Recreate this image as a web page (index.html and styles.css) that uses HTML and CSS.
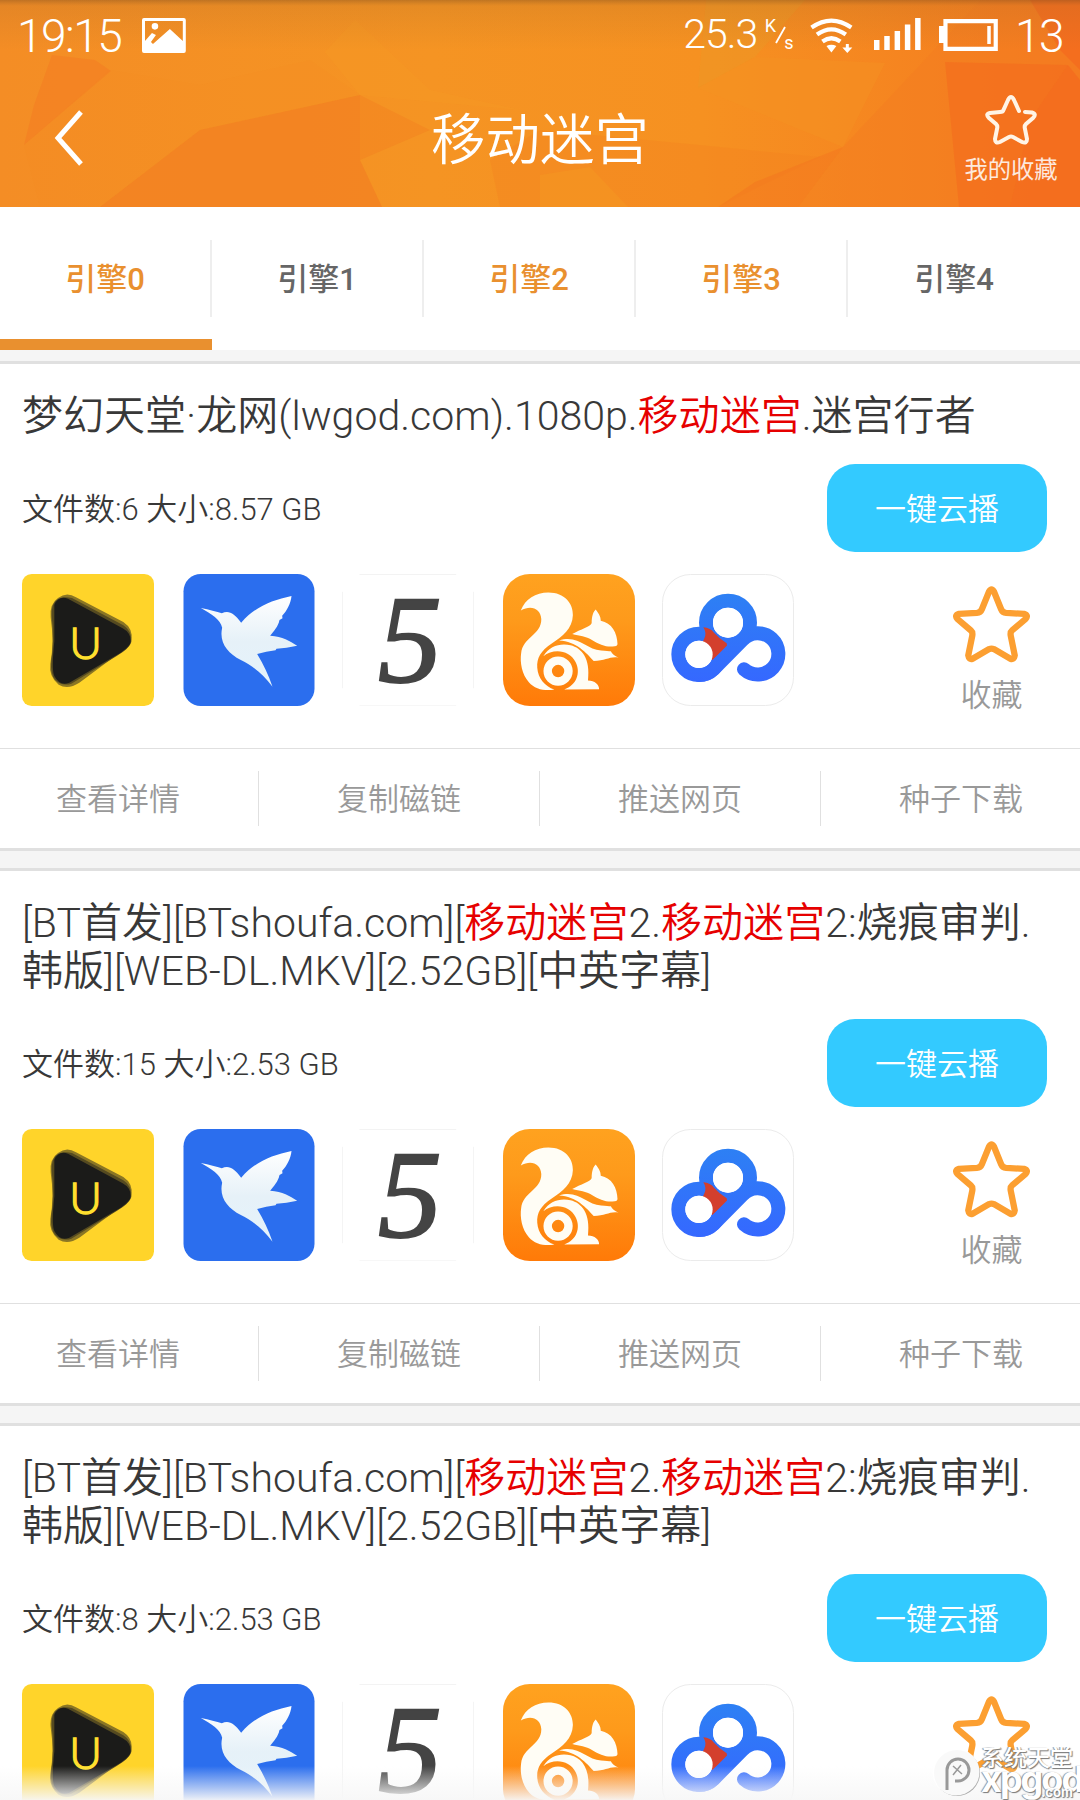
FILE: index.html
```html
<!DOCTYPE html>
<html lang="zh-CN">
<head>
<meta charset="utf-8">
<title>移动迷宫</title>
<link rel="stylesheet" href="styles.css">
</head>
<body>
<svg class="defs" width="0" height="0" aria-hidden="true">
  <defs>
    <linearGradient id="birdFill" x1="0" y1="0" x2="0" y2="1"><stop offset="0" stop-color="#fff"/><stop offset=".5" stop-color="#e6f1f8"/><stop offset="1" stop-color="#e4f3fb"/></linearGradient>
    <linearGradient id="ucFill" x1="0" y1="0" x2="0" y2="1"><stop offset="0" stop-color="#ffa21f"/><stop offset=".35" stop-color="#fe9a1b"/><stop offset="1" stop-color="#ff7a08"/></linearGradient>
    <linearGradient id="panFill" gradientUnits="userSpaceOnUse" x1="0" y1="100" x2="0" y2="365"><stop offset="0" stop-color="#2d80f4"/><stop offset="1" stop-color="#3568ff"/></linearGradient>
  </defs>
  <symbol id="player" viewBox="66 42 396 396">
    <rect x="66" y="42" width="396" height="396" rx="29" fill="#ffd42a"/>
    <path d="M174 114Q200 94 228 112L370 186Q400 206 394 240Q392 264 362 276L238 368Q204 390 176 374Q146 350 151 312Q163 246 152 172Q148 132 174 114Z" fill="#8b7624"/>
    <path d="M166 124Q182 106 216 114L370 196Q396 212 394 246Q388 266 350 288L214 371Q186 380 166 360Q150 342 154 300Q164 246 155 166Q154 138 166 124Z" fill="#554a20"/>
    <path d="M163 134Q176 106 204 116L368 205Q392 218 392 243Q392 258 362 278L208 368Q180 380 163 348Q154 330 163 244Z" fill="#1b1b19"/>
    <text x="257" y="298" text-anchor="middle" font-family="Lato" font-weight="300" font-size="128" textLength="98" lengthAdjust="spacingAndGlyphs" fill="#ffe02e" stroke="#ffe02e" stroke-width="4">U</text>
  </symbol>
  <symbol id="bird" viewBox="549 42 393 396">
    <rect x="549" y="42" width="393" height="396" rx="52" fill="#2b6eee"/>
    <path d="M601 144Q640 152 664 160C684 150 701 159 722 188C765 139 816 120 873 108C871 130 859 153 845 167L846 175L837 180C833 200 820 213 809 227C847 229 867 243 890 257Q857 264 828 266L825 271Q797 274 770 282Q799 330 816 380C785 338 755 317 721 300C681 280 655 247 665 203C660 178 633 163 601 144Z" fill="url(#birdFill)"/>
  </symbol>
  <symbol id="five" viewBox="38 43 393 393">
    <path d="M90 43.500H378M90 436H378M38.500 96V383M430.500 96V383" stroke="#efefef" stroke-width="3"/>
    <text x="145" y="364" font-family="Liberation Serif" font-style="italic" font-weight="400" font-size="372" textLength="190" lengthAdjust="spacingAndGlyphs" fill="#444" stroke="#444" stroke-width="6">5</text>
  </symbol>
  <symbol id="squirrel" viewBox="520 44 393 393">
    <rect x="520" y="44" width="393" height="393" rx="80" fill="url(#ucFill)"/>
    <g fill="#fffdf5">
      <path d="M573 153C586 118 617 99 655 99C704 99 729 132 728 167C727 207 697 230 665 251C632 273 620 295 622 323C624 354 645 379 673 388C645 393 615 387 597 366C576 343 570 307 574 280C579 232 635 225 634 178C632 148 604 135 573 153Z"/>
      <path d="M726 223C750 209 783 200 784 190C784 170 789 156 796 150C803 160 811 169 811 183C844 190 860 218 861 253Q859 260 852 259C830 263 806 254 786 241C766 229 749 229 726 223Z"/>
      <path d="M687 242C746 224 767 270 812 272Q833 274 841 274Q846 285 864 293C838 288 827 303 790 303C769 280 738 244 687 242Z"/>
      <path d="M640 289C658 257 692 249 721 256C754 264 781 295 773 361C793 361 807 374 806 387L702 388C740 375 752 337 736 306C718 270 670 265 640 289Z"/>
    </g>
    <circle cx="684" cy="333" r="31" fill="none" stroke="#fffdf5" stroke-width="25"/>
  </symbol>
  <symbol id="pan" viewBox="66 42 396 396">
    <rect x="67.500" y="43.500" width="393" height="393" rx="84" fill="#fff" stroke="#ebebeb" stroke-width="3"/>
    <g fill="none" stroke="url(#panFill)" stroke-width="42">
      <circle cx="264" cy="188" r="66"/>
      <circle cx="177" cy="283" r="62"/>
      <path d="M190 202Q212 204 222 218Q238 236 260 250L262 262L217 300L180 262L192 238Q202 220 190 202Z" fill="#d33f2d" stroke="none"/>
      <path d="M177 345Q202 345 221 327L308 239A62 62 0 1 1 312 328" stroke-linecap="round"/>
    </g>
    <circle cx="177" cy="283" r="41" fill="#fff"/><circle cx="264" cy="188" r="45" fill="#fff"/>
  </symbol>
  <symbol id="star" viewBox="0 0 232 230">
    <path d="M109 15Q116 3 123 15L145 69Q149 79 160 80L214 83Q228 87 219 98L178 133Q172 138 174 149L186 208Q184 222 173 218L123 189Q116 186 109 189L59 218Q48 222 46 208L58 149Q60 138 54 133L13 98Q4 87 18 83L72 80Q83 79 87 69Z" fill="none" stroke="#fc9f31" stroke-width="19" stroke-linejoin="round"/>
  </symbol>
</svg>

<main class="screen">
  <header class="top">
    <svg class="facets" viewBox="0 0 1080 207" preserveAspectRatio="none">
      <defs><linearGradient id="base"><stop offset="0" stop-color="#f48d25"/><stop offset=".4" stop-color="#f59423"/><stop offset=".65" stop-color="#f69121"/><stop offset="1" stop-color="#f57a1f"/></linearGradient>
      <linearGradient id="shade" x1="0" y1="0" x2="0" y2="1"><stop offset="0" stop-color="#754a20" stop-opacity=".42"/><stop offset=".12" stop-color="#a06528" stop-opacity=".18"/><stop offset="1" stop-color="#a06528" stop-opacity="0"/></linearGradient></defs>
      <path fill="url(#base)" d="M0 0H1080V207H0Z"/>
      <path fill="#f47d23" opacity=".6" d="M52 55L95 60L111 71L24 145L34 105Z"/>
      <path fill="#f27f22" opacity=".7" d="M100 207L200 130L360 95V160L382 207Z"/>
      <path fill="#f58a22" opacity=".2" d="M110 70L200 85L310 60L360 95L200 130L100 207H40L24 145Z"/>
      <path fill="#f38421" opacity=".55" d="M360 95L430 130L360 160Z"/>
      <path fill="#f69a24" opacity=".35" d="M325 52L355 20L430 90L520 110L360 95Z"/>
      <path fill="#f48120" opacity=".35" d="M490 160L540 130L700 145L820 157L718 207H500Z"/>
      <path fill="#f69b24" opacity=".4" d="M540 175L590 167L628 207H540Z"/>
      <path fill="#eb9a25" opacity=".45" d="M706 0H805L755 57L698 88Z"/>
      <path fill="#f69424" opacity=".4" d="M698 88L755 57L885 63L843 147Z"/>
      <path fill="#f57c22" opacity=".45" d="M981 0L843 147L798 207H1080V0Z"/>
      <path fill="#f47420" opacity=".45" d="M843 147L755 182L718 207H798Z"/>
      <path fill="#f3651d" opacity=".45" d="M945 62L1068 65L1030 120L1010 207H959Z"/>
      <path fill="#f4551c" opacity=".35" d="M1030 0H1080V70L1060 50ZM1068 65L1080 80V207H1010L1030 120Z"/>
      <path fill="url(#shade)" d="M0 0H1080V50H0Z"/>
    </svg>
    <div class="status">
      <span class="clock">19:15</span>
      <svg class="photo" viewBox="0 0 44 35"><path fill="#fff" fill-rule="evenodd" d="M2 0H42Q44 0 44 2V33Q44 35 42 35H2Q0 35 0 33V2Q0 0 2 0ZM3 3V23L10 15L14 17L9 24L11 26L28 11L41 23V3ZM13 5A3.300 3.300 0 1 1 13 11.600A3.300 3.300 0 1 1 13 5Z"/></svg>
      <span class="speed">25.3</span>
      <span class="unit"><i>K</i><svg viewBox="0 0 14 20"><path d="M2 18L11 2" stroke="#fff" stroke-width="1.800"/></svg><i>s</i></span>
      <svg class="wifi" viewBox="0 0 44 36"><g fill="none" stroke="#fff" stroke-width="4.200"><path d="M1.500 9.500Q21.500-4.500 41.500 9.500M7 16.500Q21.500 6 36 16.500M12.500 23.500Q21.500 17 30.500 23.500"/></g><path fill="#fff" d="M16.500 28Q21.500 25.500 26.500 28L21.500 34.500ZM36 26H39V29.500H42.500L37.500 35L32.500 29.500H36Z"/></svg>
      <svg class="signal" viewBox="0 0 48 32"><path fill="#fff" d="M0 22H5.500V32H0ZM10.300 18H15.800V32H10.300ZM20.700 13H26.200V32H20.700ZM31 6.500H36.500V32H31ZM41.300 0H46.800V32H41.300Z"/></svg>
      <svg class="battery" viewBox="0 0 60 34"><path d="M6.500 3H57V31H6.500Z" fill="none" stroke="#fff" stroke-width="4.200"/><path fill="#fff" d="M0 8H6V25H0ZM48.500 8H52V26H48.500Z"/></svg>
      <span class="level">13</span>
    </div>
    <nav class="bar">
      <svg class="back" viewBox="0 0 30 56"><path d="M28 2L5 28L28 54" fill="none" stroke="#fff" stroke-width="5"/></svg>
      <h1>移动迷宫</h1>
      <div class="fav-link">
        <svg viewBox="0 0 52 51"><path d="M34 17L29 6Q26 0 23 6L18.500 16Q18 18 15 18L5 19Q0 20 4 24L11 30Q13 32 12 35L10 45Q10 50 15 48L24 43Q26 42 28 43L37 48Q42 50 42 45L40 35Q39 32 41 30L48 24Q52 20 47 18.500L40 18" fill="none" stroke="#fff4e6" stroke-width="4" stroke-linecap="round"/></svg>
        <span>我的收藏</span>
      </div>
    </nav>
  </header>

  <nav class="tabs">
    <div class="tab hot current"><span>引擎0</span></div><div class="tab"><span>引擎1</span></div><div class="tab hot"><span>引擎2</span></div><div class="tab hot"><span>引擎3</span></div><div class="tab"><span>引擎4</span></div>
  </nav>

  <section class="list">
    <article class="card">
      <h2>梦幻天堂·龙网(lwgod.com).1080p.<em>移动迷宫</em>.迷宫行者</h2>
      <div class="meta"><p>文件数:6 大小:8.57 GB</p><button>一键云播</button></div>
      <div class="apps"><svg><use href="#player"/></svg><svg><use href="#bird"/></svg><svg><use href="#five"/></svg><svg><use href="#squirrel"/></svg><svg><use href="#pan"/></svg><div class="save"><svg><use href="#star"/></svg><span>收藏</span></div></div>
      <div class="actions"><span>查看详情</span><span>复制磁链</span><span>推送网页</span><span>种子下载</span></div>
    </article>
    <article class="card">
      <h2>[BT首发][BTshoufa.com][<em>移动迷宫</em>2.<em>移动迷宫</em>2:烧痕审判.<br>韩版][WEB-DL.MKV][2.52GB][中英字幕]</h2>
      <div class="meta"><p>文件数:15 大小:2.53 GB</p><button>一键云播</button></div>
      <div class="apps"><svg><use href="#player"/></svg><svg><use href="#bird"/></svg><svg><use href="#five"/></svg><svg><use href="#squirrel"/></svg><svg><use href="#pan"/></svg><div class="save"><svg><use href="#star"/></svg><span>收藏</span></div></div>
      <div class="actions"><span>查看详情</span><span>复制磁链</span><span>推送网页</span><span>种子下载</span></div>
    </article>
    <article class="card">
      <h2>[BT首发][BTshoufa.com][<em>移动迷宫</em>2.<em>移动迷宫</em>2:烧痕审判.<br>韩版][WEB-DL.MKV][2.52GB][中英字幕]</h2>
      <div class="meta"><p>文件数:8 大小:2.53 GB</p><button>一键云播</button></div>
      <div class="apps"><svg><use href="#player"/></svg><svg><use href="#bird"/></svg><svg><use href="#five"/></svg><svg><use href="#squirrel"/></svg><svg><use href="#pan"/></svg><div class="save"><svg><use href="#star"/></svg></div></div>
    </article>
  </section>
  <div class="fade"></div>
  <div class="watermark">
    <svg viewBox="0 0 50 50"><circle cx="26" cy="26" r="23" fill="#aaa"/><circle cx="25" cy="25" r="23.500" fill="#fff" fill-opacity=".93"/><path d="M16 43V23A11 11 0 1 1 27 34H24" fill="none" stroke="#999" stroke-width="3"/><path d="M22 19L31 27M30 18L22 28" stroke="#999" stroke-width="1.500"/></svg>
    <div class="mark-text"><b>系统天堂</b><strong>xpgod</strong><small>.com</small></div>
  </div>
</main>
</body>
</html>
```
FILE: styles.css
```css
* { box-sizing: border-box; margin: 0; padding: 0; }
body { background: #fff; font-family: Roboto, "Noto Sans CJK SC", sans-serif; font-weight: 350; color: #383838; }
.defs { position: absolute; }
.screen { position: relative; width: 1080px; height: 1800px; overflow: hidden; }
h1, h2, em, i { font-weight: inherit; font-style: normal; }

.top { position: relative; height: 207px; color: #fff; }
.facets { position: absolute; inset: 0; width: 100%; height: 100%; }
.status { position: relative; display: flex; align-items: flex-start; height: 70px; padding: 18px 17px 0 17px; font-weight: 300; white-space: nowrap; }
.clock, .level { margin-top: 1px; font-size: 46px; line-height: 35px; letter-spacing: -1.5px; }
.clock { width: 126px; }
.photo { width: 44px; height: 35px; }
.speed { width: 80px; margin-left: 497px; font-size: 41px; line-height: 32px; letter-spacing: -1px; }
.unit { display: flex; width: 30px; height: 33px; margin-left: 2px; font-size: 18px; line-height: 16px; font-weight: 400; }
.unit svg { width: 14px; height: 20px; margin: 7px -4px 0 -2px; flex: none; }
.unit i:last-child { align-self: flex-end; }
.wifi { width: 44px; height: 36px; margin-left: 15px; }
.signal { width: 48px; height: 32px; margin-left: 21px; }
.battery { width: 60px; height: 34px; margin-left: 17px; }
.level { margin-left: 16px; }
.bar { position: relative; display: grid; grid-template-columns: 224px 1fr 224px; align-items: start; height: 137px; }
.back { width: 30px; height: 56px; margin: 40px 0 0 53px; }
.bar h1 { margin-top: 40px; text-align: center; font-size: 54.5px; line-height: 60px; }
.fav-link { display: flex; flex-direction: column; align-items: center; padding: 24px 0 0 86px; }
.fav-link svg { width: 52px; height: 51px; }
.fav-link span { margin: 12px 0 0 0; font-size: 23.3px; line-height: 26px; font-weight: 400; opacity: .85; }

.tabs { display: flex; height: 143px; padding-right: 20px; }
.tab { flex: 1; padding-top: 33px; color: #666; font-size: 31px; line-height: 79px; text-align: center; font-weight: 500; }
.tab span { display: block; height: 77px; border-right: 2px solid #eee; }
.tab:last-child span { border: 0; }
.tab.hot { color: #e9902f; }
.current { border-bottom: 11px solid #e9902f; }

.list { display: flex; flex-direction: column; gap: 17px; padding-top: 11px; background: #f5f5f5; }
.card { border: solid #e0e0e0; border-width: 3px 0; background: #fff; overflow: hidden; }
.card h2 { padding: 28px 0 0 22px; font-size: 41px; line-height: 48px; letter-spacing: .03px; white-space: nowrap; }
em { color: #e60000; }
.meta { display: flex; align-items: center; justify-content: space-between; height: 88px; margin: 24px 33px 22px 22px; font-size: 31px; }
.meta p { padding-bottom: 4px; }
.meta button { width: 220px; height: 88px; border: 0; border-radius: 28px; padding-bottom: 4px; background: #33caff; color: #fff; font: inherit; }
.apps { display: flex; gap: 28px; height: 174px; padding-left: 22px; }
.apps > svg { flex: none; width: 132px; height: 132px; }
.apps > svg:nth-child(2) { margin: 0 -1px 0 1px; }
.apps > svg:nth-child(4) { margin: 0 -1px 0 1px; }
.save { display: flex; flex-direction: column; align-items: center; margin-left: 131px; padding-top: 12px; color: #999; font-size: 31px; }
.save svg { width: 77px; height: 77px; }
.save span { margin-top: 10px; line-height: 46px; }
.actions { display: flex; width: 1124px; height: 100px; margin-left: -22px; border-top: 1px solid #e0e0e0; padding: 22px 0; color: #999; font-size: 31px; }
.actions span { flex: 1; line-height: 58px; text-align: center; border-right: 1px solid #e0e0e0; }

.fade { position: absolute; left: 0; right: 0; bottom: 0; height: 34px; background: linear-gradient(rgba(247,247,247,0), rgba(247,247,247,.95)); }
.watermark { position: absolute; left: 931px; top: 1747px; display: flex; width: 149px; height: 53px; overflow: hidden; color: #fff; font-weight: 500; text-shadow: 1px 1px 1px #777, -1px 0 1px #888; }
.watermark svg { flex: none; width: 50px; height: 50px; }
.mark-text { position: relative; width: 100px; }
.watermark b { display: block; font-size: 23px; line-height: 24px; font-weight: 500; }
.watermark strong { display: block; margin-top: -8px; font: bold 36px/32px Inter, sans-serif; letter-spacing: -2px; }
.watermark small { position: absolute; left: 60px; top: 39px; font: bold 13px/13px Inter, sans-serif; }
```
